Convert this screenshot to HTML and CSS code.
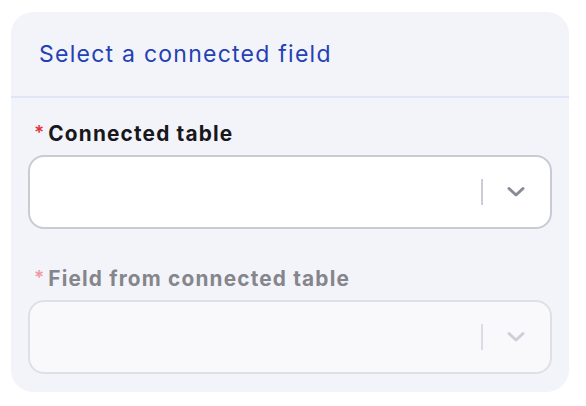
FILE: index.html
```html
<!DOCTYPE html>
<html>
<head>
<meta charset="utf-8">
<link rel="stylesheet" href="styles.css">
</head>
<body>
<div class="panel">
  <div class="panel-header">Select a connected field</div>
  <div class="panel-body">
    <div class="field">
      <label class="label"><span class="req">*</span>Connected table</label>
      <div class="select">
        <div class="select-value"></div>
        <div class="select-sep"></div>
        <svg class="chev" width="20" height="12" viewBox="0 0 20 12"><path d="M3 2.5L10 9L17 2.5" fill="none" stroke="currentColor" stroke-width="3" stroke-linecap="round" stroke-linejoin="round"/></svg>
      </div>
    </div>
    <div class="field disabled">
      <label class="label"><span class="req">*</span>Field from connected table</label>
      <div class="select">
        <div class="select-value"></div>
        <div class="select-sep"></div>
        <svg class="chev" width="20" height="12" viewBox="0 0 20 12"><path d="M3 2.5L10 9L17 2.5" fill="none" stroke="currentColor" stroke-width="3" stroke-linecap="round" stroke-linejoin="round"/></svg>
      </div>
    </div>
  </div>
</div>
</body>
</html>
```

FILE: styles.css
```css
html, body { margin: 0; padding: 0; background: #fff; }
body { font-family: Inter, "Noto Sans", sans-serif; padding: 12px 17px 0 11px; }
.panel {
  background: #f3f4f9;
  border-radius: 22px;
  height: 380px;
  box-sizing: border-box;
}
.panel-header {
  height: 86px;
  box-sizing: border-box;
  padding: 28px 0 0 28px;
  font-size: 23px;
  line-height: 28px;
  color: #2341b5;
  letter-spacing: 1.25px;
  border-bottom: 2px solid #e0e5f7;
}
.panel-body { padding: 24px 17px 0 17px; }
.field + .field { margin-top: 38px; }
.label {
  display: flex;
  align-items: flex-start;
  font-size: 20.8px;
  font-weight: 650;
  color: #17171c;
  letter-spacing: 1.18px;
  line-height: 24px;
  padding-left: 6px;
  margin-bottom: 9px;
}
.req { color: #e0343f; font-size: 19px; font-weight: 600; margin-right: 4px; line-height: 22px; letter-spacing: 0; }
.select {
  height: 74px;
  box-sizing: border-box;
  border: 2px solid #c9cad2;
  border-radius: 16px;
  background: #fff;
  display: flex;
  align-items: center;
  padding-right: 24px;
}
.select-value { flex: 1; }
.select-sep { width: 2px; height: 26px; background: #cbccd4; margin-right: 23px; }
.chev { color: #878c96; }
.disabled .label { color: #85858c; }
.disabled .req { color: #ef9aa0; }
.disabled .select { background: #f9f9fc; border-color: #dfe0e7; }
.disabled .select-sep { background: #dcdde4; }
.disabled .chev { color: #cdd0d7; }
```
